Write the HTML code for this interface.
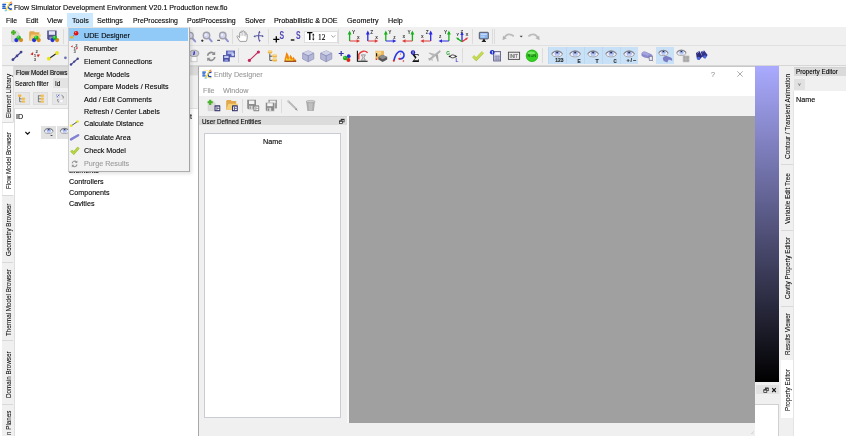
<!DOCTYPE html>
<html><head><meta charset="utf-8"><title>Flow Simulator Development Environment</title>
<style>
html,body{margin:0;padding:0;background:#fff;}
body{width:848px;height:447px;position:relative;overflow:hidden;font-family:"Liberation Sans",sans-serif;font-size:8px;color:#000;-webkit-text-stroke:0.12px;}
.a{position:absolute;}
.t{position:absolute;white-space:nowrap;line-height:10px;height:10px;transform:scaleX(0.897);transform-origin:0 0;}
.s{font-size:7.6px;transform:scaleX(0.828);}
.vt{position:absolute;white-space:nowrap;line-height:10px;height:10px;transform-origin:0 0;transform:rotate(-90deg) scaleX(0.828);font-size:7.6px;-webkit-text-stroke:0.05px;}
.g{background:#f0f0f0;}
.sep{position:absolute;width:1px;background:#d4d4d4;}
svg{position:absolute;overflow:visible;}
svg text{font-family:"Liberation Sans",sans-serif;}
</style></head><body><div id="root" style="position:absolute;left:0;top:0;width:848px;height:447px;will-change:transform;">

<svg style="left:2px;top:1.3px;" width="10.6" height="10.6" viewBox="0 0 10.6 10.6"><path d="M0.300 2.700h3.800v1.300h-3.800zM0.300 4.600h3.200v1.300h-3.200zM0.300 6.500h3.600v1.400h-3.600z" fill="#1a5ac8"/><path d="M1.400 2.700h1v5.200h-1z" fill="#3b78d8" opacity="0.600"/><path d="M10.300 3.300a3 3 0 1 0 0 5l-0.900-1.300a1.500 1.500 0 1 1 0-2.400z" fill="#1146b8"/><path d="M2.800 9.600C4.800 7.200 5.400 3.800 8.200 0.800L9 1.600C6.800 4 6.400 7.600 4 10.200z" fill="#f7d23c"/><path d="M7.600 1.600L9.800 0.300L9.600 2.800z" fill="#f08a3a"/><path d="M1.600 0.900L6.600 1.300L6.500 1.900L1.600 1.600z" fill="#f9e27a"/><path d="M2.600 9.300l2.400-0.500l0.200 1.200l-2.400 0.500z" fill="#7fd3f0"/><path d="M5.800 8.400l4.400 0.800l-0.200 0.800l-4.400-0.800z" fill="#f9dc6a"/><circle cx="9.800" cy="2.400" r="0.600" fill="#ef6a5a"/></svg>
<div class="t" id="title" style="left:13.6px;top:2.7px;transform:scaleX(0.889);">Flow Simulator Development Environment V20.1 Production new.flo</div>
<div class="a" style="left:67px;top:13px;width:26px;height:14px;background:#cce8ff;"></div>
<div class="t" style="left:6px;top:15.7px;transform:scaleX(0.86);">File</div>
<div class="t" style="left:26px;top:15.7px;">Edit</div>
<div class="t" style="left:47px;top:15.7px;">View</div>
<div class="t" style="left:72px;top:15.7px;">Tools</div>
<div class="t" style="left:97px;top:15.7px;">Settings</div>
<div class="t" style="left:132.6px;top:15.7px;transform:scaleX(0.862);">PreProcessing</div>
<div class="t" style="left:187px;top:15.7px;transform:scaleX(0.877);">PostProcessing</div>
<div class="t" style="left:244.5px;top:15.7px;">Solver</div>
<div class="t" style="left:274px;top:15.7px;transform:scaleX(0.907);">Probabilistic &amp; DOE</div>
<div class="t" style="left:347px;top:15.7px;">Geometry</div>
<div class="t" style="left:388px;top:15.7px;">Help</div>
<div class="a" style="left:2px;top:27px;width:844px;height:39px;background:#f0f0f0;"></div>
<div class="a" style="left:2px;top:45px;width:844px;height:1px;background:#e0e0e0;"></div>
<div class="a" style="left:2px;top:64.5px;width:844px;height:1px;background:#d6d6d6;"></div>
<div class="a" style="left:2px;top:66px;width:844px;height:369.5px;background:#f0f0f0;"></div>
<svg style="left:0px;top:0px;" width="848" height="70" viewBox="0 0 848 70"><path d="M11.5 31h5.2l2.4 2.4v8.4h-7.6z" fill="#dcdcdc" stroke="#c4c4c4" stroke-width="0.5"/><path d="M11 32.6h5M13.5 30.1v5" stroke="#48b424" stroke-width="2"/><circle cx="16.4" cy="40.1" r="2.1" fill="#2233d6"/><circle cx="21.0" cy="40.1" r="2.1" fill="#d98a1e"/><circle cx="18.7" cy="37.6" r="2.2" fill="#1fb81f"/><circle cx="18.099999999999998" cy="36.9" r="0.8" fill="#7fe87f"/><path d="M29.2 32.2l0.8-1h4l0.8 1h4.6v8.4h-10.2z" fill="#e2a94c"/><path d="M29.2 40.6l2.2-6h9.8l-2.2 6z" fill="#f3cf7a"/><circle cx="34.1" cy="40.1" r="2.1" fill="#2233d6"/><circle cx="38.699999999999996" cy="40.1" r="2.1" fill="#d98a1e"/><circle cx="36.4" cy="37.6" r="2.2" fill="#1fb81f"/><circle cx="35.8" cy="36.9" r="0.8" fill="#7fe87f"/><path d="M47.2 30.4h9.4v9.6h-8.2l-1.2-1.2z" fill="#50508e"/><rect x="48.8" y="31.2" width="6.2" height="3.6" fill="#e6e6f6"/><rect x="49.4" y="36.6" width="4" height="3.4" fill="#8a8ac0"/><circle cx="52.5" cy="40.1" r="2.1" fill="#2233d6"/><circle cx="57.099999999999994" cy="40.1" r="2.1" fill="#d98a1e"/><circle cx="54.8" cy="37.6" r="2.2" fill="#1fb81f"/><circle cx="54.199999999999996" cy="36.9" r="0.8" fill="#7fe87f"/><path d="M192.2 38.0L195.2 41.4" stroke="#9292cc" stroke-width="2" stroke-linecap="round"/><circle cx="190" cy="35.6" r="3.2" fill="#d6d6f4" stroke="#a0a0aa" stroke-width="1.400"/><circle cx="189.2" cy="34.800000000000004" r="1.2" fill="#eeeeff"/><path d="M208.7 37.9L211.7 41.3" stroke="#9292cc" stroke-width="2" stroke-linecap="round"/><circle cx="206.5" cy="35.5" r="3.2" fill="#d6d6f4" stroke="#a0a0aa" stroke-width="1.400"/><circle cx="205.7" cy="34.7" r="1.2" fill="#eeeeff"/><path d="M201.1 40.7h2.4M202.3 39.5v2.4" stroke="#222" stroke-width="0.9"/><path d="M225.0 37.9L228.0 41.3" stroke="#9292cc" stroke-width="2" stroke-linecap="round"/><circle cx="222.8" cy="35.5" r="3.2" fill="#d6d6f4" stroke="#a0a0aa" stroke-width="1.400"/><circle cx="222.0" cy="34.7" r="1.2" fill="#eeeeff"/><path d="M217.20000000000002 40.3h2.8" stroke="#222" stroke-width="0.9"/><path d="M239.800 41.400c-0.800-1.600-2.200-3.200-2.800-4.600c-0.300-0.900 0.900-1.300 1.500-0.500l1.100 1.400v-4.600c0-1 1.400-1 1.500 0v-1.400c0-1 1.500-1 1.600 0v-0.200c0-1 1.500-1 1.600 0v1c0-1 1.400-1 1.500 0v2c0-0.900 1.300-0.900 1.400 0v3.500c0 1.600-0.600 2.400-1 3.400z" fill="#fff" stroke="#8a8a8a" stroke-width="0.800" stroke-linejoin="round"/><path d="M241.100 33.200v2.800M242.700 31.800v4M244.300 32.600v3.400M245.800 34.500v2" stroke="#a6a6a6" stroke-width="0.600"/><path d="M254.2 36.6c3-1.4 6-1.4 8.8-0.4M259.6 31.6c-1.4 3.2-1.4 6.6 0 9.8" stroke="#5656a6" stroke-width="1.1" fill="none"/><path d="M258.2 32.4l1.6-1.6l0.6 2.2zM262.2 35l1.6 1.2l-1.8 1zM254.8 35.4l-1.4 1.4l2 0.6zM258.8 40.2l1 1.8l0.8-2z" fill="#5656a6"/><path d="M273.2 39.4h6.2M276.3 36.3v6.2" stroke="#000" stroke-width="1.3"/><text x="279.4" y="38.600" font-size="10.400" font-weight="bold" fill="#5048b4" textLength="4.600" lengthAdjust="spacingAndGlyphs">S</text><path d="M290.8 40h3.6" stroke="#000" stroke-width="1.3"/><text x="296" y="38.600" font-size="10.400" font-weight="bold" fill="#5048b4" textLength="4.600" lengthAdjust="spacingAndGlyphs">S</text><path d="M349.6 41V32.5" stroke="#18b018" stroke-width="1.3"/><path d="M347.70000000000005 34.4L349.6 30.6L351.5 34.4z" fill="#18b018"/><path d="M349.6 41H357.8" stroke="#e03a3a" stroke-width="1"/><path d="M356.6 39.2L360.1 41L356.6 42.8z" fill="#e03a3a"/><text x="352.0" y="34.4" font-size="4.8" font-weight="bold" fill="#3a3a3a">Y</text><text x="357.0" y="38.6" font-size="4.8" font-weight="bold" fill="#3a3a3a">x</text><path d="M367.8 41V32.5" stroke="#2a2ae0" stroke-width="1.3"/><path d="M365.90000000000003 34.4L367.8 30.6L369.7 34.4z" fill="#2a2ae0"/><path d="M367.8 41H376" stroke="#e03a3a" stroke-width="1"/><path d="M374.8 39.2L378.3 41L374.8 42.8z" fill="#e03a3a"/><text x="370.2" y="34.4" font-size="4.8" font-weight="bold" fill="#3a3a3a">Z</text><text x="375.2" y="38.6" font-size="4.8" font-weight="bold" fill="#3a3a3a">x</text><path d="M385.8 41V32.5" stroke="#18b018" stroke-width="1.3"/><path d="M383.90000000000003 34.4L385.8 30.6L387.7 34.4z" fill="#18b018"/><path d="M385.8 41H394" stroke="#2a2ae0" stroke-width="1"/><path d="M392.8 39.2L396.3 41L392.8 42.8z" fill="#2a2ae0"/><text x="388.2" y="34.4" font-size="4.8" font-weight="bold" fill="#3a3a3a">Y</text><text x="393.2" y="38.6" font-size="4.8" font-weight="bold" fill="#3a3a3a">z</text><path d="M412.4 41V32.5" stroke="#18b018" stroke-width="1.3"/><path d="M410.5 34.4L412.4 30.6L414.29999999999995 34.4z" fill="#18b018"/><path d="M412.4 41H404.2" stroke="#e03a3a" stroke-width="1"/><path d="M405.5 39.2L402 41L405.5 42.8z" fill="#e03a3a"/><text x="407.4" y="34.4" font-size="4.8" font-weight="bold" fill="#3a3a3a">Y</text><text x="402.6" y="38.400" font-size="4.800" font-weight="bold" fill="#3a3a3a">x</text><path d="M430.7 41V32.5" stroke="#2a2ae0" stroke-width="1.3"/><path d="M428.8 34.4L430.7 30.6L432.59999999999997 34.4z" fill="#2a2ae0"/><path d="M430.7 41H422.5" stroke="#e03a3a" stroke-width="1"/><path d="M423.8 39.2L420.3 41L423.8 42.8z" fill="#e03a3a"/><text x="425.7" y="34.4" font-size="4.8" font-weight="bold" fill="#3a3a3a">Z</text><text x="420.90000000000003" y="38.400" font-size="4.800" font-weight="bold" fill="#3a3a3a">x</text><path d="M448.9 41V32.5" stroke="#18b018" stroke-width="1.3"/><path d="M447.0 34.4L448.9 30.6L450.79999999999995 34.4z" fill="#18b018"/><path d="M448.9 41H440.7" stroke="#2a2ae0" stroke-width="1"/><path d="M442.0 39.2L438.5 41L442.0 42.8z" fill="#2a2ae0"/><text x="443.9" y="34.4" font-size="4.8" font-weight="bold" fill="#3a3a3a">Y</text><text x="439.1" y="38.400" font-size="4.800" font-weight="bold" fill="#3a3a3a">z</text><path d="M462 41.6V33.6" stroke="#2a2ae0" stroke-width="1.3"/><path d="M460.3 35L462 31.8L463.700 35z" fill="#2a2ae0"/><path d="M462 41.600L458 39" stroke="#18b018" stroke-width="1.400"/><path d="M456 37.600l3.200 0.300l-1.500 2.200z" fill="#18b018"/><path d="M462 41.600L466.200 39" stroke="#e03a3a" stroke-width="1.400"/><path d="M468.300 37.600l-3.200 0.300l1.500 2.200z" fill="#e03a3a"/><text x="456.200" y="36.400" font-size="4.400" font-weight="bold" fill="#333">Y</text><text x="460.600" y="33" font-size="4.400" font-weight="bold" fill="#333">Z</text><text x="465.400" y="36.400" font-size="4.400" font-weight="bold" fill="#333">X</text><rect x="479.300" y="32.300" width="9" height="6.600" rx="0.500" fill="#8eb4ec" stroke="#4a4a56" stroke-width="0.900"/><rect x="480.800" y="33.600" width="6" height="1.400" fill="#c4dcfa"/><rect x="480.800" y="35.800" width="4" height="1.600" fill="#b2d0f6"/><path d="M482.400 41.400h3l-0.600-2.200h-1.800z" fill="#1a1a1a"/><rect x="481.800" y="41" width="4.200" height="0.900" fill="#1a1a1a"/><path d="M513.800 36.400C511 33.400 506.400 33.600 504.800 37.200" stroke="#bcbcbc" stroke-width="1.700" fill="none"/><path d="M502.600 40.200l0.400-4.400l3.800 2.400z" fill="#b4b4b4"/><path d="M528.400 36.400C531.200 33.400 535.800 33.600 537.400 37.200" stroke="#bcbcbc" stroke-width="1.700" fill="none"/><path d="M539.600 40.200l-0.400-4.400l-3.800 2.400z" fill="#b4b4b4"/><path d="M519.6 35.8h3.2l-1.6 1.8z" fill="#444"/><path d="M12.8 59.8L21.2 52" stroke="#42428e" stroke-width="1.3"/><circle cx="12.9" cy="59.7" r="1.4" fill="#42428e"/><circle cx="17" cy="55.9" r="1.3" fill="#42428e"/><circle cx="21.1" cy="52.1" r="1.4" fill="#42428e"/><text x="35.400" y="53.200" font-size="4.200" font-weight="bold" fill="#333">2</text><text x="33.800" y="57.200" font-size="4.400" font-weight="bold" fill="#333">1</text><text x="33.800" y="61" font-size="4.200" font-weight="bold" fill="#333">3</text><path d="M30.400 54.200l2.800-2.200l-0.200 3.200z" fill="#e02020"/><path d="M40 54.400l-2 3l-1.200-3z" fill="#e02020"/><path d="M48.800 58.700L57 53" stroke="#222" stroke-width="1.100"/><circle cx="48.8" cy="58.7" r="1.9" fill="#e6e61e"/><circle cx="57" cy="53" r="1.9" fill="#e6e61e"/><circle cx="65.4" cy="57.8" r="1.4" fill="#7272b4"/><rect x="191" y="55.4" width="6" height="6.4" fill="#fafafa" stroke="#b0b0b0" stroke-width="0.6"/><ellipse cx="194.2" cy="53.4" rx="4.6" ry="3.2" fill="#c8c8d0" stroke="#8a8a92" stroke-width="0.7"/><path d="M194.4 51.4l-0.6 3.6" stroke="#1a1ad0" stroke-width="1.2"/><path d="M207.6 55.8a3.7 3.7 0 0 1 6.4-2.2" stroke="#8e8e8e" stroke-width="1.700" fill="none"/><path d="M215.2 51.6v3.4h-3.4z" fill="#8e8e8e"/><path d="M214.8 57a3.7 3.7 0 0 1-6.4 2.2" stroke="#8e8e8e" stroke-width="1.700" fill="none"/><path d="M207.2 61.2v-3.4h3.4z" fill="#8e8e8e"/><rect x="226" y="50.6" width="9" height="6.6" fill="#5a62b6"/><rect x="227.6" y="51.4" width="5.8" height="2.6" fill="#a8b0e8"/><circle cx="232.8" cy="54.4" r="1.5" fill="#c8d0f6"/><rect x="223" y="55" width="6.8" height="6.6" fill="#4a50a4"/><rect x="224.2" y="55.8" width="4.4" height="2.2" fill="#c4caf0"/><rect x="224.6" y="59.4" width="3.4" height="2.2" fill="#8e96d8"/><path d="M249.4 60.4L258.4 52" stroke="#c42860" stroke-width="1.1"/><circle cx="249.400" cy="60.400" r="1.600" fill="#c42860"/><circle cx="258.400" cy="52" r="1.600" fill="#c42860"/><path d="M269.800 53.400v7h2.600M269.800 56.200h2.600" stroke="#333" stroke-width="0.800" fill="none"/><rect x="267.800" y="50.600" width="4.400" height="3" rx="1" fill="#efb544"/><ellipse cx="270" cy="51.300" rx="2.100" ry="0.700" fill="#f9dc8c"/><rect x="272.400" y="54.600" width="4.600" height="3" rx="1" fill="#efb544"/><ellipse cx="274.700" cy="55.300" rx="2.200" ry="0.700" fill="#f9dc8c"/><rect x="272.400" y="58.600" width="4.600" height="3" rx="1" fill="#efb544"/><ellipse cx="274.700" cy="59.300" rx="2.200" ry="0.700" fill="#f9dc8c"/><path d="M284.600 61.200c-0.200-2.600 0.600-3.800 1-5.400c0.200-1.400 0.400-2.600 1.200-3.800c0.400 1.400 1.400 2.400 1.800 3.800c0.400 1 0.400 2 0.400 2.600c0.600-1.200 0.800-2.600 1.600-3.600c0.600 1.200 1.600 2.400 1.800 3.800c0.400-0.600 0.600-1.200 1-1.800c0.800 1 1.400 2 1.600 3.200c0.200-0.400 0.400-0.800 0.600-1c0.400 0.800 0.600 1.400 0.600 2.200z" fill="#f2860c"/><path d="M285.600 61.200c0-1.800 0.600-2.600 1-3.800c0.600 0.800 1.200 1.600 1.400 2.600c0.600-0.800 1-1.600 1.400-2.400c0.800 0.800 1.400 1.600 1.600 2.600c0.400-0.400 0.800-0.800 1-1.200c0.800 0.600 1.400 1.200 1.600 2.200z" fill="#fbd63a"/><rect x="284.400" y="60.700" width="11.800" height="1.100" fill="#8a2c08"/><path d="M308.2 50.800l5.600 2.400v5.800l-5.600 2.800l-5.600-2.800v-5.800z" fill="#b4b7d6" stroke="#8486b2" stroke-width="0.600"/><path d="M308.2 50.800l5.600 2.400l-5.600 2.600l-5.600-2.600z" fill="#d0d3e8"/><path d="M302.59999999999997 53.200l5.600 2.600l5.600-2.600M308.2 55.800v6" stroke="#8486b2" stroke-width="0.800" fill="none"/><path d="M326.2 50.800l5.600 2.400v5.800l-5.600 2.800l-5.600-2.800v-5.800z" fill="#b4b7d6" stroke="#8486b2" stroke-width="0.600"/><path d="M326.2 50.800l5.600 2.400l-5.600 2.600l-5.600-2.600z" fill="#d0d3e8"/><path d="M320.59999999999997 53.200l5.600 2.600l5.600-2.600M326.2 55.800v6" stroke="#8486b2" stroke-width="0.800" fill="none"/><path d="M338.700 53.500h5M341.200 51v5" stroke="#3434a4" stroke-width="1.200"/><circle cx="348.700" cy="56.200" r="1.900" fill="#2a2ad8"/><circle cx="348.400" cy="60" r="2" fill="#e02424"/><circle cx="345.200" cy="58" r="2.300" fill="#18b418"/><circle cx="344.600" cy="57.300" r="0.800" fill="#6fe06f"/><path d="M357.400 50.800v10.400h10.200" stroke="#111" stroke-width="1.100" fill="none"/><path d="M358.800 59.400v-5c2-3.800 6.600-4.200 8.800-1.600" stroke="#e63a3a" stroke-width="1.400" fill="none"/><path d="M361.400 54.800h4l-1.400 2.800l1.400 2.800h-4l1.400-2.800z" fill="#ddd" stroke="#555" stroke-width="0.500"/><rect x="375.400" y="50.800" width="8.600" height="8.600" fill="#eab862"/><rect x="376.200" y="51.400" width="5" height="3" fill="#f6d78c"/><path d="M378.400 57l4-2.200l4.800 2.200v2.600l-4.600 2.400l-4.200-2.400z" fill="#555"/><path d="M378.400 57l4-2.200l4.800 2.200l-4.600 2.200z" fill="#8e8e8e"/><rect x="376" y="53.200" width="1.200" height="3.200" fill="#222"/><circle cx="376.400" cy="59.200" r="0.800" fill="#d22"/><path d="M393.800 60.600c1.200-4.200 2.400-7.800 5.400-9c3-1 5.200 1.400 4.800 4.200c-0.400 2.200-2 3.200-4.400 3" stroke="#2a38e0" stroke-width="1.600" fill="none"/><circle cx="393.800" cy="60.800" r="1" fill="#e02424"/><circle cx="399.400" cy="58.800" r="1.100" fill="#e02424"/><circle cx="403.400" cy="61" r="0.800" fill="#e02424"/><circle cx="400.600" cy="54" r="0.500" fill="#e02424"/><text x="412" y="62.200" font-size="11.500" font-weight="bold" style="font-family:'Liberation Serif',serif" fill="#111">Σ</text><circle cx="413" cy="52.500" r="2.200" fill="#2222b8"/><rect x="412.700" y="51.200" width="0.700" height="2.400" fill="#fff"/><path d="M429.600 59.600L439.600 51.400" stroke="#b0b0b0" stroke-width="2" stroke-linecap="round"/><path d="M436.200 54.200l-6.800-1.800l-0.800 0.800l5 3.200z" fill="#b8b8b8"/><path d="M435.400 55.200l2.200 6.600l1-0.600l-0.600-7z" fill="#a8a8a8"/><path d="M431 58.400l-2.400-0.600l-0.400 0.600l1.800 1zM431.200 58.800l0.800 2.400l0.600-0.400l-0.200-2.400z" fill="#b0b0b0"/><text x="446.200" y="54.600" font-size="4.800" font-weight="bold" fill="#28a028">G</text><text x="455.600" y="62" font-size="4.800" font-weight="bold" fill="#3838d0">L</text><ellipse cx="452.800" cy="56.400" rx="2.300" ry="1.500" fill="#fff" stroke="#222" stroke-width="0.800"/><path d="M448.400 56.400l2-1.400v2.800zM457.200 56.400l-2-1.400v2.800z" fill="#222"/><path d="M473.200 56.200L476.200 59.200L482.800 52.200" stroke="#a2bc34" stroke-width="2.700" fill="none" stroke-linejoin="miter"/><path d="M473.200 56.200L476.200 59.200L482.800 52.200" stroke="#c6de50" stroke-width="1.900" fill="none" stroke-linejoin="miter"/><rect x="493.600" y="51.600" width="7" height="9.400" fill="#c6c6de" stroke="#54547e" stroke-width="0.800"/><rect x="495.400" y="52.600" width="4.400" height="2" fill="#f4f4fa"/><path d="M494.400 56.400h5.600M494.400 58h5.600M494.400 59.600h5.600M496.200 55.600v5M498.200 55.600v5" stroke="#7a7aa6" stroke-width="0.500"/><circle cx="492.200" cy="52.300" r="2.300" fill="#1c2ccc"/><rect x="491.900" y="51" width="0.800" height="2.600" fill="#fff"/><rect x="508.400" y="52.200" width="11.200" height="7.200" fill="#ececec" stroke="#4a4a4a" stroke-width="0.900"/><text x="509.600" y="57.800" font-size="4.800" font-weight="bold" fill="#777" letter-spacing="-0.200">INIT</text><circle cx="532" cy="55.800" r="6" fill="#34d022"/><circle cx="532" cy="55.800" r="5.800" fill="none" stroke="#28b018" stroke-width="0.700"/><ellipse cx="531.400" cy="53.400" rx="3.600" ry="1.800" fill="#90f480" opacity="0.700"/><text x="527.600" y="57.400" font-size="4" font-weight="bold" fill="#176a10" letter-spacing="-0.100">RUN</text></svg>
<div class="a" style="left:63px;top:29px;width:1px;height:15px;background:#dcdcdc;"></div>
<div class="a" style="left:232px;top:29px;width:1px;height:15px;background:#dcdcdc;"></div>
<div class="a" style="left:268px;top:29px;width:1px;height:15px;background:#dcdcdc;"></div>
<div class="a" style="left:338px;top:29px;width:1px;height:15px;background:#dcdcdc;"></div>
<div class="a" style="left:472px;top:29px;width:1px;height:15px;background:#dcdcdc;"></div>
<div class="a" style="left:492px;top:29px;width:1px;height:15px;background:#dcdcdc;"></div>
<div class="a" style="left:494px;top:29px;width:1px;height:15px;background:#dcdcdc;"></div>
<div class="a" style="left:238px;top:48px;width:1px;height:15px;background:#dcdcdc;"></div>
<div class="a" style="left:462px;top:48px;width:1px;height:15px;background:#dcdcdc;"></div>
<div class="a" style="left:542px;top:48px;width:1px;height:15px;background:#dcdcdc;"></div>
<div class="a" style="left:303.5px;top:30.5px;width:34px;height:12px;background:#fff;border:1px solid #dedede;box-sizing:border-box;"></div>
<div class="t" style="left:307px;top:32.2px;font-weight:bold;font-size:10px;">T</div>
<svg style="left:312px;top:33px;" width="3" height="8" viewBox="0 0 3 8"><path d="M1.300 0.400L2.500 2.200H0.100zM1.300 7.600L2.500 5.800H0.100z" fill="#111"/><path d="M1.300 2v4" stroke="#111" stroke-width="0.700"/></svg>
<div class="t" style="left:317.5px;top:32.5px;font-family:Liberation Serif,serif;font-size:8.200px;">12</div>
<svg style="left:330.5px;top:35px;" width="5" height="3" viewBox="0 0 5 3"><path d="M0.300 0.300L2.300 2.300L4.300 0.300" stroke="#666" stroke-width="0.600" fill="none"/></svg>
<div class="a" style="left:547.5px;top:47.3px;width:18.1px;height:17.2px;background:#c8e1f7;border-left:1px solid #bad8f2;box-sizing:border-box;"></div>
<svg style="left:547.5px;top:47px;" width="18" height="18" viewBox="0 0 18 18"><ellipse cx="9.1" cy="6.9" rx="5.3" ry="3" fill="#f0f1f6" stroke="#94949c" stroke-width="0.800"/><circle cx="9.2" cy="6.6000000000000005" r="2.5" fill="#92a8e8"/><ellipse cx="9.2" cy="7.7" rx="1.75" ry="1.25" fill="#c2cef6"/><circle cx="9.1" cy="5.5" r="0.8999999999999999" fill="#26264a"/><path d="M3.8 6.6000000000000005Q9.1 1.5000000000000004 14.399999999999999 6.6000000000000005" stroke="#77777f" stroke-width="1" fill="none"/><text x="7.200" y="15.200" font-size="4.800" font-weight="bold" fill="#2a2a2a" stroke="#2a2a2a" stroke-width="0.150" textLength="8.200" lengthAdjust="spacingAndGlyphs">123</text></svg>
<div class="a" style="left:565.6px;top:47.3px;width:18.1px;height:17.2px;background:#c8e1f7;border-left:1px solid #bad8f2;box-sizing:border-box;"></div>
<svg style="left:565.6px;top:47px;" width="18" height="18" viewBox="0 0 18 18"><ellipse cx="9.1" cy="6.9" rx="5.3" ry="3" fill="#f0f1f6" stroke="#94949c" stroke-width="0.800"/><circle cx="9.2" cy="6.6000000000000005" r="2.5" fill="#92a8e8"/><ellipse cx="9.2" cy="7.7" rx="1.75" ry="1.25" fill="#c2cef6"/><circle cx="9.1" cy="5.5" r="0.8999999999999999" fill="#26264a"/><path d="M3.8 6.6000000000000005Q9.1 1.5000000000000004 14.399999999999999 6.6000000000000005" stroke="#77777f" stroke-width="1" fill="none"/><text x="11.400" y="16" font-size="6.200" font-weight="bold" fill="#2a2a2a" stroke="#2a2a2a" stroke-width="0.200" textLength="3.100" lengthAdjust="spacingAndGlyphs">E</text></svg>
<div class="a" style="left:583.7px;top:47.3px;width:18.1px;height:17.2px;background:#c8e1f7;border-left:1px solid #bad8f2;box-sizing:border-box;"></div>
<svg style="left:583.7px;top:47px;" width="18" height="18" viewBox="0 0 18 18"><ellipse cx="9.1" cy="6.9" rx="5.3" ry="3" fill="#f0f1f6" stroke="#94949c" stroke-width="0.800"/><circle cx="9.2" cy="6.6000000000000005" r="2.5" fill="#92a8e8"/><ellipse cx="9.2" cy="7.7" rx="1.75" ry="1.25" fill="#c2cef6"/><circle cx="9.1" cy="5.5" r="0.8999999999999999" fill="#26264a"/><path d="M3.8 6.6000000000000005Q9.1 1.5000000000000004 14.399999999999999 6.6000000000000005" stroke="#77777f" stroke-width="1" fill="none"/><text x="11.400" y="16" font-size="6.200" font-weight="bold" fill="#2a2a2a" stroke="#2a2a2a" stroke-width="0.200" textLength="3.100" lengthAdjust="spacingAndGlyphs">T</text></svg>
<div class="a" style="left:601.8px;top:47.3px;width:18.1px;height:17.2px;background:#c8e1f7;border-left:1px solid #bad8f2;box-sizing:border-box;"></div>
<svg style="left:601.8px;top:47px;" width="18" height="18" viewBox="0 0 18 18"><ellipse cx="9.1" cy="6.9" rx="5.3" ry="3" fill="#f0f1f6" stroke="#94949c" stroke-width="0.800"/><circle cx="9.2" cy="6.6000000000000005" r="2.5" fill="#92a8e8"/><ellipse cx="9.2" cy="7.7" rx="1.75" ry="1.25" fill="#c2cef6"/><circle cx="9.1" cy="5.5" r="0.8999999999999999" fill="#26264a"/><path d="M3.8 6.6000000000000005Q9.1 1.5000000000000004 14.399999999999999 6.6000000000000005" stroke="#77777f" stroke-width="1" fill="none"/><text x="11.400" y="16" font-size="6.200" font-weight="bold" fill="#2a2a2a" stroke="#2a2a2a" stroke-width="0.200" textLength="3.100" lengthAdjust="spacingAndGlyphs">C</text></svg>
<div class="a" style="left:619.9px;top:47.3px;width:18.1px;height:17.2px;background:#c8e1f7;border-left:1px solid #bad8f2;box-sizing:border-box;"></div>
<svg style="left:619.9px;top:47px;" width="18" height="18" viewBox="0 0 18 18"><ellipse cx="9.1" cy="6.9" rx="5.3" ry="3" fill="#f0f1f6" stroke="#94949c" stroke-width="0.800"/><circle cx="9.2" cy="6.6000000000000005" r="2.5" fill="#92a8e8"/><ellipse cx="9.2" cy="7.7" rx="1.75" ry="1.25" fill="#c2cef6"/><circle cx="9.1" cy="5.5" r="0.8999999999999999" fill="#26264a"/><path d="M3.8 6.6000000000000005Q9.1 1.5000000000000004 14.399999999999999 6.6000000000000005" stroke="#77777f" stroke-width="1" fill="none"/><text x="6.400" y="15.400" font-size="5.600" font-weight="bold" fill="#2a2a2a" stroke="#2a2a2a" stroke-width="0.150" textLength="10" lengthAdjust="spacing">+/−</text></svg>
<svg style="left:640px;top:47px;" width="16" height="18" viewBox="0 0 16 18"><path d="M1.400 6.800c0.200-1.800 2-2.800 3.600-2.200l6.400 2.600c1.200 0.800 1.600 2 1.400 3.400l-0.200 3.200l-3.600 0l0.200-2.200l-4.800-1.200l-2.800-1.400z" fill="#8a8acc"/><path d="M1.800 6.200c0.400-1.200 1.800-1.800 3-1.400l6 2.400c-1.400-0.200-2.400 0.600-2.600 1.800l-6.400-2.200z" fill="#a4a4de"/><rect x="9.200" y="9.400" width="3" height="3.800" fill="#f0f0f8" stroke="#70708a" stroke-width="0.600"/><path d="M12.200 13.200l0.800 1" stroke="#666" stroke-width="0.600"/></svg>
<div class="a" style="left:656px;top:47.3px;width:18.2px;height:17.2px;background:#c8e1f7;"></div>
<svg style="left:656px;top:47px;" width="18" height="18" viewBox="0 0 18 18"><ellipse cx="7.4" cy="6" rx="4.6" ry="2.6" fill="#f0f1f6" stroke="#94949c" stroke-width="0.800"/><circle cx="7.5" cy="5.7" r="2.1" fill="#92a8e8"/><ellipse cx="7.5" cy="6.8" rx="1.47" ry="1.05" fill="#c2cef6"/><circle cx="7.4" cy="4.6" r="0.756" fill="#26264a"/><path d="M2.8000000000000007 5.7Q7.4 1.0 12.0 5.7" stroke="#77777f" stroke-width="1" fill="none"/><path d="M6.800 11.400c0.400-1.800 2-2.800 3.800-2.400l4.200 1.400c1.200 0.600 1.600 2 1.400 3.400l-3.400-1.200l-1.600 3l-3.600-1.600z" fill="#7c7cc4"/></svg>
<svg style="left:676px;top:47px;" width="16" height="18" viewBox="0 0 16 18"><ellipse cx="5.4" cy="5.8" rx="4.6" ry="2.6" fill="#f0f1f6" stroke="#94949c" stroke-width="0.800"/><circle cx="5.5" cy="5.5" r="2.1" fill="#92a8e8"/><ellipse cx="5.5" cy="6.6" rx="1.47" ry="1.05" fill="#c2cef6"/><circle cx="5.4" cy="4.4" r="0.756" fill="#26264a"/><path d="M0.8000000000000007 5.5Q5.4 0.7999999999999998 10.0 5.5" stroke="#77777f" stroke-width="1" fill="none"/><rect x="7.200" y="9" width="5.800" height="5.800" fill="#d2d2d2"/><path d="M8.600 9v5.800M10.100 9v5.800M11.600 9v5.800M7.200 10.400h5.800M7.200 11.900h5.800M7.200 13.400h5.800M7.200 9h5.800v5.800h-5.800z" stroke="#8c8c8c" stroke-width="0.450" fill="none"/></svg>
<svg style="left:694px;top:47px;" width="16" height="18" viewBox="0 0 16 18"><path d="M2 6l3.400-2l3 5.400l-3 3.400l-2.600-1.600z" fill="#2a2a7a"/><path d="M6.800 4.800l3.400-1.400l3.400 4.600l-2.400 3.400l-3-1.600z" fill="#34348c"/><circle cx="4.600" cy="11.400" r="1.700" fill="#4a68e0"/><circle cx="10.800" cy="9.800" r="1.600" fill="#4a68e0"/><path d="M3 6.400l2-1.200M8 5l2-0.800" stroke="#9aa8f0" stroke-width="0.700"/></svg>
<div class="a" style="left:2px;top:66px;width:11px;height:369.5px;background:#f0f0f0;"></div>
<div class="a" style="left:2px;top:67px;width:11px;height:55px;background:#f3f3f3;border-bottom:1px solid #d9d9d9;"></div>
<div class="a" style="left:2.5px;top:123px;width:11.5px;height:72px;background:#fff;"></div>
<div class="a" style="left:13px;top:66px;width:0.7px;height:56px;background:#dcdcdc;"></div>
<div class="a" style="left:2px;top:195px;width:11px;height:1px;background:#d9d9d9;"></div>
<div class="a" style="left:2px;top:262px;width:11px;height:1px;background:#d9d9d9;"></div>
<div class="a" style="left:2px;top:340px;width:11px;height:1px;background:#d9d9d9;"></div>
<div class="a" style="left:2px;top:404px;width:11px;height:1px;background:#d9d9d9;"></div>
<div class="vt" style="left:4px;top:118px;">Element Library</div>
<div class="vt" style="left:4px;top:189px;">Flow Model Browser</div>
<div class="vt" style="left:4px;top:255.5px;">Geometry Browser</div>
<div class="vt" style="left:4px;top:336px;">Thermal Model Browser</div>
<div class="vt" style="left:4px;top:398px;">Domain Browser</div>
<div class="vt" style="left:4px;top:435px;">n Planes</div>
<div class="a" style="left:14px;top:66px;width:184px;height:9px;background:#dadada;border-top:1px solid #d2d2d2;box-sizing:border-box;"></div>
<div class="a" style="left:14px;top:75px;width:184px;height:1px;background:#e8e8e8;"></div>
<div class="t s" style="left:16px;top:67.6px;">Flow Model Brows</div>
<div class="t s" style="left:15px;top:78.5px;">Search filter</div>
<div class="a" style="left:52.5px;top:78px;width:40px;height:10px;background:#e3e3e3;"></div>
<div class="t s" style="left:54.5px;top:78.5px;">Id</div>
<div class="a" style="left:14.5px;top:92px;width:15.5px;height:12.6px;background:#e6e6e6;border:0.500px solid #dcdcdc;box-sizing:border-box;"></div>
<div class="a" style="left:32.5px;top:92px;width:15.5px;height:12.6px;background:#e6e6e6;border:0.500px solid #dcdcdc;box-sizing:border-box;"></div>
<div class="a" style="left:51.5px;top:92px;width:15.5px;height:12.6px;background:#e6e6e6;border:0.500px solid #dcdcdc;box-sizing:border-box;"></div>
<div class="a" style="left:13.5px;top:108px;width:184.5px;height:328px;background:#fff;border-left:1px solid #dedede;border-top:1px solid #e0e0e0;box-sizing:border-box;"></div>
<div class="t" style="left:15.9px;top:112.0px;">ID</div>
<div class="t" style="left:189.5px;top:112.0px;">t</div>
<div class="a" style="left:41.2px;top:126.2px;width:15px;height:13.2px;background:#e2e2e2;"></div>
<div class="a" style="left:56.6px;top:126.2px;width:15px;height:13.2px;background:#e2e2e2;"></div>
<div class="t" style="left:69px;top:166.2px;">Elements</div>
<div class="t" style="left:69px;top:177.2px;">Controllers</div>
<div class="t" style="left:69px;top:188.2px;">Components</div>
<div class="t" style="left:69px;top:199.2px;">Cavities</div>
<svg style="left:0px;top:0px;" width="100" height="145" viewBox="0 0 100 145"><path d="M19.600 96.500v5.200h2.200M19.600 98.800h2.200" stroke="#555" stroke-width="0.700" fill="none"/><rect x="18" y="94.600" width="3.400" height="2.300" rx="0.800" fill="#f0b848"/><rect x="21.600" y="97.600" width="3.600" height="2.300" rx="0.800" fill="#f2c058"/><rect x="21.600" y="100.400" width="3.600" height="2.300" rx="0.800" fill="#f2c058"/><path d="M38.400 95.400v6.600M38.400 95.800h2.600M38.400 98.800h2.600M38.400 101.800h2.600" stroke="#555" stroke-width="0.700" fill="none"/><rect x="40.600" y="94.600" width="3.400" height="2.300" rx="0.800" fill="#f2c058"/><rect x="40.600" y="97.600" width="3.400" height="2.300" rx="0.800" fill="#f2c058"/><rect x="40.600" y="100.400" width="3.400" height="2.300" rx="0.800" fill="#f2c058"/><rect x="56.200" y="94.600" width="3" height="2.800" fill="#fff" stroke="#aab" stroke-width="0.400"/><path d="M56.600 95.800l0.900 0.900l1.500-1.900" stroke="#2038d0" stroke-width="0.800" fill="none"/><path d="M61.600 95.200c1.600 0.600 2 2 1.400 3.200M58.200 99c-1 1-0.600 2.600 0.600 3.200" stroke="#667" stroke-width="0.900" fill="none"/><rect x="60" y="99.800" width="3" height="2.800" fill="#fff" stroke="#ccd" stroke-width="0.400"/><path d="M25.400 132l2.200 2.200l2.200-2.200" stroke="#111" stroke-width="1.100" fill="none"/><ellipse cx="48.7" cy="131" rx="4.3" ry="2.5" fill="#f0f1f6" stroke="#94949c" stroke-width="0.800"/><circle cx="48.800000000000004" cy="130.7" r="2.0" fill="#92a8e8"/><ellipse cx="48.800000000000004" cy="131.8" rx="1.4" ry="1.0" fill="#c2cef6"/><circle cx="48.7" cy="129.6" r="0.72" fill="#26264a"/><path d="M44.400000000000006 130.7Q48.7 126.1 53.0 130.7" stroke="#77777f" stroke-width="1" fill="none"/><rect x="50.600" y="135.200" width="1.800" height="0.800" fill="#222"/><ellipse cx="64.6" cy="131" rx="4.3" ry="2.5" fill="#f0f1f6" stroke="#94949c" stroke-width="0.800"/><circle cx="64.69999999999999" cy="130.7" r="2.0" fill="#92a8e8"/><ellipse cx="64.69999999999999" cy="131.8" rx="1.4" ry="1.0" fill="#c2cef6"/><circle cx="64.6" cy="129.6" r="0.72" fill="#26264a"/><path d="M60.3 130.7Q64.6 126.1 68.89999999999999 130.7" stroke="#77777f" stroke-width="1" fill="none"/></svg>
<div class="a" style="left:198px;top:66px;width:557px;height:369.5px;background:#f0f0f0;border-left:1px solid #a8a8a8;border-top:1px solid #c8c8c8;box-sizing:border-box;"></div>
<div class="a" style="left:199px;top:67px;width:556px;height:29px;background:#fff;"></div>
<svg style="left:202.3px;top:69px;" width="10.069999999999999" height="10.069999999999999" viewBox="0 0 10.6 10.6"><path d="M0.300 2.700h3.800v1.300h-3.800zM0.300 4.600h3.200v1.300h-3.200zM0.300 6.500h3.600v1.400h-3.600z" fill="#1a5ac8"/><path d="M1.400 2.700h1v5.200h-1z" fill="#3b78d8" opacity="0.600"/><path d="M10.300 3.300a3 3 0 1 0 0 5l-0.900-1.300a1.500 1.500 0 1 1 0-2.400z" fill="#1146b8"/><path d="M2.800 9.600C4.800 7.200 5.400 3.800 8.200 0.800L9 1.600C6.800 4 6.400 7.600 4 10.200z" fill="#f7d23c"/><path d="M7.600 1.600L9.800 0.300L9.600 2.800z" fill="#f08a3a"/><path d="M1.600 0.900L6.600 1.300L6.500 1.900L1.600 1.600z" fill="#f9e27a"/><path d="M2.600 9.300l2.400-0.500l0.200 1.200l-2.400 0.500z" fill="#7fd3f0"/><path d="M5.800 8.400l4.400 0.800l-0.200 0.800l-4.400-0.800z" fill="#f9dc6a"/><circle cx="9.800" cy="2.400" r="0.600" fill="#ef6a5a"/></svg>
<div class="t" style="left:214px;top:70.2px;color:#9a9a9a;">Entity Designer</div>
<div class="t" style="left:710.5px;top:70.2px;color:#9a9a9a;">?</div>
<svg style="left:737px;top:71px;" width="6" height="6" viewBox="0 0 6 6"><path d="M0.3 0.3L5.7 5.7M5.7 0.3L0.3 5.7" stroke="#8a8a8a" stroke-width="0.7" fill="none"/></svg>
<div class="t" style="left:203px;top:85.7px;color:#9a9a9a;">File</div>
<div class="t" style="left:222.5px;top:85.7px;color:#9a9a9a;">Window</div>
<div class="a" style="left:199px;top:116px;width:147.5px;height:9.3px;background:#dcdcdc;border-top:1px solid #d2d2d2;box-sizing:border-box;"></div>
<div class="a" style="left:346.5px;top:116px;width:2.5px;height:307px;background:#f8f8f8;"></div>
<div class="t s" style="left:201.5px;top:116.6px;">User Defined Entities</div>
<div class="a" style="left:204px;top:133px;width:137px;height:285px;background:#fff;border:1px solid #c9cdd3;box-sizing:border-box;"></div>
<div class="t" style="left:262.5px;top:136.7px;">Name</div>
<div class="a" style="left:349px;top:115.9px;width:406px;height:306.8px;background:#a0a0a0;"></div>
<svg style="left:0px;top:0px;" width="360" height="130" viewBox="0 0 360 130"><path d="M208.200 101h4.600l2.300 2.300v7.300h-6.900z" fill="#dadada" stroke="#c2c2c2" stroke-width="0.500"/><path d="M207.600 102.300h5.200M210.200 99.700v5.200" stroke="#44b422" stroke-width="2.100"/><rect x="214.5" y="105.3" width="5.800" height="6" rx="0.600" fill="#38386c"/><rect x="215.6" y="106.6" width="3.700" height="3.500" fill="#fff"/><path d="M216.9 106.6v3.500M216.9 108.3h2.400" stroke="#38386c" stroke-width="0.800"/><path d="M226.200 101l0.800-1h3.800l0.800 1h4.600v8.800h-10z" fill="#e2a94c"/><path d="M226.200 109.800l2.200-6h9.800l-2.200 6z" fill="#f3cf7a"/><rect x="232" y="105.3" width="5.800" height="6" rx="0.600" fill="#38386c"/><rect x="233.1" y="106.6" width="3.700" height="3.500" fill="#fff"/><path d="M234.4 106.6v3.500M234.4 108.3h2.400" stroke="#38386c" stroke-width="0.800"/><path d="M247.200 99.800h8.800v9.400h-7.800l-1-1z" fill="#8e8e8e"/><rect x="249" y="100.600" width="5.400" height="3.400" fill="#f4f4f4"/><rect x="249" y="105.800" width="3.600" height="3.400" fill="#d8d8d8"/><rect x="249.600" y="106.400" width="1.200" height="2.400" fill="#8e8e8e"/><rect x="253.4" y="105.3" width="5.800" height="6" rx="0.600" fill="#8c8c8c"/><rect x="254.5" y="106.6" width="3.700" height="3.500" fill="#fff"/><path d="M255.8 106.6v3.500M255.8 108.3h2.400" stroke="#8c8c8c" stroke-width="0.800"/><path d="M268.400 99.800h8.600v8.600h-8.600z" fill="#9a9a9a"/><rect x="269.800" y="100.600" width="5.800" height="2.600" fill="#f0f0f0"/><path d="M265.600 102.400h8.800v8.800h-7.800l-1-1z" fill="#868686" stroke="#f0f0f0" stroke-width="0.500"/><rect x="267.200" y="103.200" width="5.600" height="3" fill="#f4f4f4"/><rect x="267.400" y="107.800" width="3.800" height="3.400" fill="#d8d8d8"/><rect x="268" y="108.400" width="1.200" height="2.400" fill="#868686"/><path d="M288 101l8.600 8.400" stroke="#b8b8b8" stroke-width="2"/><path d="M296 108.200l2.200 2.800l-3-1.400z" fill="#8a8a8a"/><path d="M287.400 100.400l1.200 1.200" stroke="#d0d0d0" stroke-width="2.200"/><path d="M306.200 101.800h8.800l-1.200 9.200h-6.400z" fill="#acacac"/><path d="M308.400 102.600h4.400l-0.600 8h-3.200z" fill="#c0c0c0"/><ellipse cx="310.600" cy="101.600" rx="4.600" ry="1.200" fill="#cecece" stroke="#949494" stroke-width="0.500"/><rect x="341.1" y="119.2" width="3" height="2.700" fill="none" stroke="#222" stroke-width="0.700"/><rect x="339.6" y="120.9" width="3" height="2.700" fill="#e8e8e8" stroke="#222" stroke-width="0.700"/><path d="M341.1 119.5h3M339.6 121.2h3" stroke="#222" stroke-width="0.900"/></svg>
<div class="a" style="left:242px;top:99px;width:1px;height:14px;background:#dcdcdc;"></div>
<div class="a" style="left:281px;top:99px;width:1px;height:14px;background:#dcdcdc;"></div>
<div class="a" style="left:755px;top:66px;width:24px;height:316px;background:linear-gradient(to bottom,#aaaaff 0%,#000 100%);"></div>
<div class="a" style="left:755px;top:382px;width:24px;height:22px;background:#f0f0f0;"></div>
<div class="a" style="left:756px;top:384.5px;width:23px;height:9.5px;background:#e2e2e2;"></div>
<div class="a" style="left:755px;top:404px;width:24px;height:32px;background:#fff;border:1px solid #d0d0d0;border-left:none;border-bottom:none;box-sizing:border-box;"></div>
<div class="a" style="left:779px;top:66px;width:14px;height:369.5px;background:#f0f0f0;"></div>
<div class="a" style="left:781px;top:360px;width:12px;height:58px;background:#fff;"></div>
<div class="a" style="left:781px;top:164px;width:12px;height:1px;background:#d9d9d9;"></div>
<div class="a" style="left:781px;top:230px;width:12px;height:1px;background:#d9d9d9;"></div>
<div class="a" style="left:781px;top:306px;width:12px;height:1px;background:#d9d9d9;"></div>
<div class="vt" style="left:782.5px;top:158.5px;font-size:7.82px;">Contour / Transient Animation</div>
<div class="vt" style="left:782.5px;top:223.5px;font-size:7.82px;">Variable Edit Tree</div>
<div class="vt" style="left:782.5px;top:299px;font-size:7.7px;">Cavity Property Editor</div>
<div class="vt" style="left:782.5px;top:354.5px;font-size:7.6px;">Results Viewer</div>
<div class="vt" style="left:782.5px;top:410.8px;font-size:7.6px;">Property Editor</div>
<div class="a" style="left:792.5px;top:66px;width:1px;height:369.5px;background:#e4e4e4;"></div>
<div class="a" style="left:793.5px;top:66px;width:54.5px;height:370px;background:#fff;"></div>
<div class="a" style="left:793px;top:66px;width:53px;height:25px;background:#f0f0f0;"></div>
<div class="a" style="left:793.5px;top:67.2px;width:52.5px;height:8.8px;background:#dadada;border-top:1px solid #d2d2d2;box-sizing:border-box;"></div>
<div class="t s" style="left:795.5px;top:67.3px;">Property Editor</div>
<div class="a" style="left:794px;top:79px;width:11px;height:11px;background:#e1e1e1;"></div>
<div class="t" style="left:795.5px;top:95.2px;">Name</div>
<svg style="left:0px;top:0px;" width="848" height="447" viewBox="0 0 848 447"><rect x="765.3" y="388" width="3" height="2.700" fill="none" stroke="#222" stroke-width="0.700"/><rect x="763.8" y="389.7" width="3" height="2.700" fill="#e8e8e8" stroke="#222" stroke-width="0.700"/><path d="M765.3 388.3h3M763.8 390h3" stroke="#222" stroke-width="0.900"/><path d="M772.200 388.200l3.600 3.800M775.800 388.200l-3.600 3.800" stroke="#111" stroke-width="1.100"/><path d="M798.400 83.400l1 2.200l1-2.200" stroke="#555" stroke-width="0.600" fill="none"/><path d="M753.600 431.400l-2.400 2.600M753.600 433.200l-1 1" stroke="#bdbdbd" stroke-width="0.600"/></svg>
<div class="a" style="left:69.5px;top:28.5px;width:122px;height:145px;background:rgba(0,0,0,0.10);filter:blur(1.500px);"></div>
<div class="a" style="left:68px;top:27px;width:121.5px;height:145px;background:#f2f2f2;border:1px solid #cdcdcd;border-top-color:#e2e2e2;border-right-color:#a4a4a4;border-bottom-color:#adadad;box-sizing:border-box;"></div>
<div class="a" style="left:69.2px;top:28.4px;width:118.5px;height:12.7px;background:#91c9f7;"></div>
<div class="t" id="pm0" style="left:83.8px;top:30.7px;">UDE Designer</div>
<div class="t" id="pm1" style="left:83.8px;top:44.1px;">Renumber</div>
<div class="t" id="pm2" style="left:83.8px;top:57.0px;">Element Connections</div>
<div class="t" id="pm3" style="left:83.8px;top:69.8px;">Merge Models</div>
<div class="t" id="pm4" style="left:83.8px;top:82.2px;">Compare Models / Results</div>
<div class="t" id="pm5" style="left:83.8px;top:94.5px;">Add / Edit Comments</div>
<div class="t" id="pm6" style="left:83.8px;top:106.8px;">Refresh / Center Labels</div>
<div class="t" id="pm7" style="left:83.8px;top:119.3px;">Calculate Distance</div>
<div class="t" id="pm8" style="left:83.8px;top:132.6px;">Calculate Area</div>
<div class="t" id="pm9" style="left:83.8px;top:145.8px;">Check Model</div>
<div class="t" id="pm10" style="left:83.8px;top:159.1px;color:#9a9a9a;">Purge Results</div>
<svg style="left:0px;top:0px;" width="200" height="175" viewBox="0 0 200 175"><path d="M72.800 36.400L74.800 34.600" stroke="#555" stroke-width="0.600"/><circle cx="76.100" cy="33.300" r="2.300" fill="#de1414"/><circle cx="75.6" cy="32.5" r="0.7" fill="#f88"/><circle cx="71.800" cy="37.300" r="1.500" fill="#e0b818"/><text x="75.2" y="46.6" font-size="4.2" font-weight="bold" fill="#444">2</text><text x="73.6" y="49.8" font-size="4.4" font-weight="bold" fill="#444">1</text><text x="73.6" y="52.8" font-size="4.2" font-weight="bold" fill="#444">3</text><path d="M70.8 46.6l2-1.400l-0.400 2.400z" fill="#e02020"/><path d="M78.200 47.600l-1.600 2.200l-0.600-2.400z" fill="#e02020"/><path d="M70.900 64.600L77.800 58.600" stroke="#42428e" stroke-width="1.200"/><circle cx="71" cy="64.500" r="1.200" fill="#42428e"/><circle cx="74.300" cy="61.600" r="1.100" fill="#42428e"/><circle cx="77.700" cy="58.700" r="1.200" fill="#42428e"/><path d="M71.200 125.800L77.600 121.500" stroke="#333" stroke-width="0.800"/><circle cx="71.200" cy="125.800" r="1.300" fill="#e6e61e"/><circle cx="77.600" cy="121.500" r="1.300" fill="#e6e61e"/><path d="M71 139.400L78.200 135.200" stroke="#8282d2" stroke-width="2.400" stroke-linecap="round"/><path d="M71.200 150.600L73.800 153.200L78.600 147.600" stroke="#98b62e" stroke-width="2.600" fill="none"/><path d="M71.200 150.600L73.800 153.200L78.600 147.600" stroke="#b6d648" stroke-width="1.800" fill="none"/><path d="M72.200 163.400a2.500 2.500 0 0 1 4.400-1.400" stroke="#989898" stroke-width="1.100" fill="none"/><path d="M77.400 160.400v2.600h-2.600z" fill="#989898"/><path d="M77 164.400a2.500 2.500 0 0 1-4.400 1.400" stroke="#989898" stroke-width="1.100" fill="none"/><path d="M71.800 167.400v-2.600h2.600z" fill="#989898"/></svg>
</div></body></html>
